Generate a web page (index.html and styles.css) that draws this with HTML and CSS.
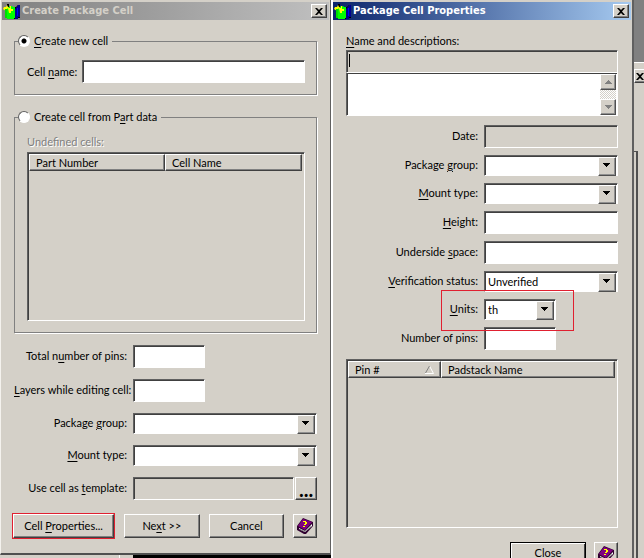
FILE: index.html
```html
<!DOCTYPE html>
<html lang="en">
<head>
<meta charset="utf-8">
<title>Package Cell</title>
<link rel="stylesheet" href="styles.css">
</head>
<body>
<svg class="defs" aria-hidden="true">
  <symbol id="app" viewBox="0 0 17 17">
    <path fill="#000" d="M4 1h2v3H4zM11 4h2v12h-2zM15 2h2v13h-2v1h-3V5z"/>
    <path fill="#ff0" d="M1 4h2l1-2 1 2h2l-1 3v2H4v6H3V8L0 6z"/>
    <path fill="#0d0" d="M2 6h2v9H2z"/>
    <path fill="#0f0" d="M4 6l3-3h2l1 1h2v11h-1v1H4z"/>
    <path fill="#ff0" d="M5 5h2V3h1v3h2v2H8v2H6z"/>
    <path fill="#000090" d="M13 5l2-3h2v12h-2v2h-3V6z"/>
    <path fill="#00f" d="M14 5h1v8h-1z"/>
  </symbol>
  <symbol id="book" viewBox="0 0 16 16">
    <path fill="#300030" d="M6 0l10 4v4l-7 8H7L0 12V8z"/>
    <path fill="#800080" d="M6 1l9 3-7 8-7-4z"/>
    <path fill="#fff" d="M2 10l6 3 7-7v2l-7 6-6-3z"/>
    <path fill="#808080" d="M3 11l5 2 6-6v1l-6 6-5-2z"/>
    <path fill="#ff0" d="M6 3h3v1h1v2H9v1H7V6h1V4H6zM6 8h2v1H6z"/>
  </symbol>
  <symbol id="cross" viewBox="0 0 8 7">
    <path fill="#000" d="M0 0h2l2 2 2-2h2L5 3.500 8 7H6L4 5 2 7H0l3-3.500z"/>
  </symbol>
</svg>
<div class="desktop">
  <div class="left-side">
    <section class="dialog create">
      <header class="title inactive">
        <svg class="app"><use href="#app"/></svg>
        <h1>Create Package Cell</h1>
        <button class="close" aria-label="Close create dialog"><svg><use href="#cross"/></svg></button>
      </header>
      <form class="content">
        <fieldset class="group">
          <legend><input type="radio" name="mode" id="new" checked><label for="new"><u>C</u>reate new cell</label></legend>
          <div class="name-row">
            <label for="cellname">Cell <u>n</u>ame:</label>
            <input class="field" id="cellname" type="text">
          </div>
        </fieldset>
        <fieldset class="group parts">
          <legend><input type="radio" name="mode" id="part"><label for="part">Create cell from P<u>a</u>rt data</label></legend>
          <p class="disabled">Undefined cells:</p>
          <div class="list">
            <table>
              <colgroup><col class="half"><col></colgroup>
              <thead><tr><th>Part Number</th><th>Cell Name</th></tr></thead>
            </table>
          </div>
        </fieldset>
        <div class="form">
          <label for="pins">Total n<u>u</u>mber of pins:</label>
          <input class="field short" id="pins" type="text">
          <label for="layers"><u>L</u>ayers while editing cell:</label>
          <input class="field short" id="layers" type="text">
          <label for="group1">Package <u>g</u>roup:</label>
          <span class="combo"><select id="group1"><option></option></select></span>
          <label for="mount1"><u>M</u>ount type:</label>
          <span class="combo"><select id="mount1"><option></option></select></span>
          <label for="template">Use cell as <u>t</u>emplate:</label>
          <span class="browse"><input class="field off" id="template" type="text" readonly><button type="button" class="button dots" aria-label="Browse">...</button></span>
        </div>
        <div class="actions">
          <span class="marked"><button type="button" class="button">Cell <u>P</u>roperties...</button></span>
          <button type="button" class="button">Ne<u>x</u>t &gt;&gt;</button>
          <button type="button" class="button">Cancel</button>
          <button type="button" class="button help" aria-label="Help"><svg><use href="#book"/></svg></button>
        </div>
      </form>
    </section>
    <div class="below"></div>
  </div>
  <section class="dialog properties">
    <header class="title">
      <svg class="app"><use href="#app"/></svg>
      <h1>Package Cell Properties</h1>
      <button class="close" aria-label="Close properties dialog"><svg><use href="#cross"/></svg></button>
    </header>
    <form class="content">
      <label class="caption" for="desc"><u>N</u>ame and descriptions:</label>
      <div class="name-box"><span class="caret"></span><input class="field off" id="desc" type="text" readonly></div>
      <div class="memo">
        <textarea aria-label="Description"></textarea>
        <div class="scroll"><span class="arrow up"></span><span class="arrow"></span></div>
      </div>
      <div class="form">
        <label for="date">Date:</label>
        <input class="field off" id="date" type="text" readonly>
        <label for="group2">Package <u>g</u>roup:</label>
        <span class="combo"><select id="group2"><option></option></select></span>
        <label for="mount2"><u>M</u>ount type:</label>
        <span class="combo"><select id="mount2"><option></option></select></span>
        <label for="height"><u>H</u>eight:</label>
        <input class="field" id="height" type="text">
        <label for="space">Underside <u>s</u>pace:</label>
        <input class="field" id="space" type="text">
        <label for="status"><u>V</u>erification status:</label>
        <span class="combo"><select id="status"><option>Unverified</option></select></span>
        <label for="units"><u>U</u>nits:</label>
        <span class="units"><span class="combo short"><select id="units"><option>th</option></select></span></span>
        <label for="count">Number of pins:</label>
        <input class="field short" id="count" type="text">
      </div>
      <div class="list">
        <table>
          <colgroup><col class="third"><col></colgroup>
          <thead><tr><th>Pin #<svg class="sort" viewBox="0 0 9 8"><path d="M0 7.500h8.500L4.500 0" fill="none" stroke="#fff"/><path d="M4.500 0L.5 7" stroke="#808080"/></svg></th><th>Padstack Name</th></tr></thead>
        </table>
      </div>
      <div class="actions">
        <button type="button" class="button default">Close</button>
        <button type="button" class="button help" aria-label="Help"><svg><use href="#book"/></svg></button>
      </div>
    </form>
  </section>
  <div class="behind">
    <div class="back-window"><span class="back-close"><svg><use href="#cross"/></svg></span><div class="back-pane"></div></div>
  </div>
</div>
</body>
</html>
```
FILE: styles.css
```css
* { box-sizing: border-box; }
body {
  margin: 0;
  background: #808080;
  font: 11px/14px Lato, "Liberation Sans", sans-serif;
  color: #000;
}
input, select, textarea, button { font: inherit; color: inherit; margin: 0; border-radius: 0; }
u { text-underline-offset: 2px; }
.defs { position: absolute; width: 0; height: 0; }
.desktop {
  display: grid;
  grid-template-columns: 331fr 303fr 10px;
  height: 100vh;
  overflow: hidden;
}
.left-side { display: flex; flex-direction: column; min-width: 0; }
.dialog {
  background: #d4d0c8;
  padding: 2px 1px 0 2px;
  border-right: 2px solid #606060;
  min-width: 0;
}
.create { border-bottom: 2px solid #505050; border-left: 1px solid #f4f2ee; border-right-width: 1px; padding-left: 1px; }
.properties { border-left: 2px solid #fff; padding-left: 0; }
.below {
  flex: 1;
  background: linear-gradient(90deg, #d4d0c8 119px, #fff 119px 120px, #d4d0c8 120px 133px, #000 133px);
}

.title {
  display: flex;
  align-items: center;
  height: 18px;
  padding: 0 2px 0 1px;
  background: linear-gradient(90deg, #0a246a, #a6caf0);
  color: #fff;
}
.title.inactive { background: linear-gradient(90deg, #808080, #c0c0c0); color: #d4d0c8; }
.title h1 { flex: 1; margin: 0 0 0 2px; font: bold 11px/18px "DejaVu Sans Condensed", "DejaVu Sans", sans-serif; white-space: nowrap; }
.app { width: 17px; height: 17px; }
.close, .back-close {
  display: flex;
  align-items: center;
  justify-content: center;
  width: 16px;
  height: 14px;
  padding: 0;
  background: #d4d0c8;
  border: 1px solid;
  border-color: #fff #404040 #404040 #fff;
  box-shadow: inset -1px -1px #808080;
}
.close svg, .back-close svg { flex: none; width: 8px; height: 7px; }

.content { display: flex; flex-direction: column; }
.create .content { padding: 14px 12px 14px 12px; }
.properties .content { padding: 14px 13px 0; }

.group {
  min-width: 0;
  margin: 0;
  padding: 12px 11px 11px 12px;
  border: 1px solid #808080;
  box-shadow: 1px 1px #fff;
}
.group legend { display: flex; align-items: center; gap: 4px; height: 14px; margin-left: -9px; padding: 0 4px 0 0; }
.group input[type="radio"] {
  appearance: none;
  width: 12px;
  height: 12px;
  border: 1px solid;
  border-color: #606060 #fff #fff #606060;
  border-radius: 50%;
  background: #fff;
}
.group input[type="radio"]:checked { background: radial-gradient(circle, #000 2px, #fff 3px); }
.name-row { display: flex; align-items: center; gap: 5px; }
.name-row .field { flex: 1; }
.parts { margin-top: 15px; padding-top: 11px; }
.disabled { margin: 0 0 3px; color: #808080; text-shadow: 1px 1px #fff; }

.field, .memo, .list, .combo {
  border: 1px solid;
  border-color: #606060 #fff #fff #606060;
  box-shadow: inset 1px 1px #404040;
  background: #fff;
}
.field { width: 100%; min-width: 0; height: 23px; padding: 2px 4px; outline: 0; }
.field.off, .list { background: #d4d0c8; }
.combo { display: block; position: relative; height: 21px; padding: 2px 1px 1px 2px; }
.combo select { appearance: none; display: block; width: 100%; height: 16px; padding: 0 18px 0 1px; border: 0; background: #fff; outline: 0; }
.combo::after, .arrow {
  --ink: #000;
  width: 16px;
  height: 16px;
  background:
    linear-gradient(var(--ink), var(--ink)) 4px 5px / 7px 1px no-repeat,
    linear-gradient(var(--ink), var(--ink)) 5px 6px / 5px 1px no-repeat,
    linear-gradient(var(--ink), var(--ink)) 6px 7px / 3px 1px no-repeat,
    linear-gradient(var(--ink), var(--ink)) 7px 8px / 1px 1px no-repeat,
    #d4d0c8;
  border: 1px solid;
  border-color: #fff #505050 #505050 #fff;
  box-shadow: inset -1px -1px #909090;
}
.combo::after { content: ""; position: absolute; right: 1px; top: 1px; height: 17px; pointer-events: none; }
.arrow { --ink: #808080; }
.arrow.up { transform: scaleY(-1); border-color: #505050 #505050 #fff #fff; box-shadow: inset -1px 1px #909090; }

.form { display: grid; align-items: center; column-gap: 6px; }
.form label { padding-bottom: 2px; text-align: right; white-space: nowrap; }
.create .form { grid-template-columns: 113px 1fr; row-gap: 11px; margin-top: 12px; }
.properties .form { grid-template-columns: 132px 1fr; row-gap: 7px; margin-top: 9px; }
.short { width: 72px; }
.browse { display: flex; gap: 1px; }
.browse .field { flex: 1; }

.list { height: 169px; padding: 1px 2px 0 1px; }
.list table { width: 100%; table-layout: fixed; border-collapse: separate; border-spacing: 0; }
.half { width: 136px; }
.third { width: 93px; }
.list th {
  height: 17px;
  padding: 0 6px;
  border: 1px solid;
  border-color: #fff #404040 #404040 #fff;
  box-shadow: inset -1px -1px #808080;
  text-align: left;
  font-weight: normal;
}
.properties .list { margin-top: 9px; }
.sort { float: right; width: 9px; height: 8px; margin-top: 3px; }

.button {
  height: 24px;
  padding: 0 2px;
  background: #d4d0c8;
  border: 1px solid;
  border-color: #fff #404040 #404040 #fff;
  box-shadow: inset -1px -1px #808080;
  white-space: nowrap;
}
.dots { width: 22px; height: 23px; font-weight: bold; font-size: 20px; line-height: 12px; }
.help { display: flex; align-items: center; justify-content: center; }
.help svg { width: 16px; height: 16px; }
.create .actions { display: grid; grid-template-columns: 104fr 76fr 76fr 24px; gap: 9px; align-items: center; margin: 13px 0 0 -2px; }
.marked { border: 1px solid #e02030; display: flex; }
.marked .button { flex: 1; }
.properties .actions { display: flex; justify-content: flex-end; gap: 8px; margin-top: 14px; }
.properties .help { width: 24px; }
.default { width: 76px; height: 22px; border: 1px solid #000; box-shadow: inset 1px 1px #fff, inset -1px -1px #404040; }

.caption { margin-bottom: 2px; }
.name-box { position: relative; display: flex; }
.caret { position: absolute; left: 3px; top: 4px; width: 1px; height: 13px; background: #000; }
.memo { display: flex; height: 44px; padding: 1px 1px 0 2px; margin-top: -1px; }
.memo textarea { flex: 1; min-width: 0; height: 40px; border: 0; resize: none; outline: 0; }
.scroll {
  display: flex;
  flex-direction: column;
  justify-content: space-between;
  background: repeating-conic-gradient(#fff 0 25%, #d4d0c8 0 50%) 0 0 / 2px 2px;
}
.units { position: relative; display: block; }
.units::after {
  content: "";
  position: absolute;
  left: -43px;
  top: -9px;
  width: 131px;
  height: 39px;
  border: 1px solid #e02030;
  pointer-events: none;
}

.behind { display: flex; flex-direction: column; padding-top: 62px; overflow: hidden; }
.back-window { flex: 1; display: flex; flex-direction: column; padding-top: 6px; background: #d4d0c8; border-top: 1px solid #fff; }
.back-close { width: 10px; border-width: 1px 0 1px 1px; box-shadow: inset 0 -1px #808080; }
.back-pane { flex: 1; margin: 68px 6px 0 0; border-right: 2px solid #505050; border-top: 1px solid #505050; }
```
